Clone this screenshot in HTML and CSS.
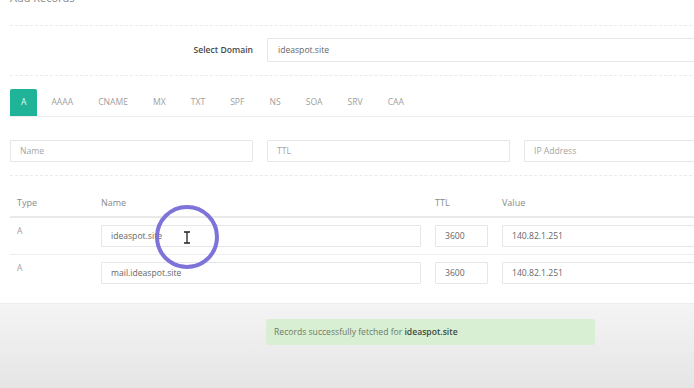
FILE: index.html
```html
<!DOCTYPE html>
<html lang="en">

<head>
    <meta charset="UTF-8">
    <meta name="viewport" content="width=device-width, initial-scale=1.0">
    <title>Add Records</title>
    <link rel="stylesheet" href="styles.css">
</head>

<body>
    <section class="panel">
        <h5 class="title">Add Records</h5>
        <div class="hr-dashed hr-first"></div>

        <div class="form-row">
            <label class="form-label" for="domain">Select Domain</label>
            <input id="domain" class="form-control domain-select" type="text" value="ideaspot.site">
        </div>

        <div class="hr-dashed"></div>

        <ul class="tabs">
            <li class="tab active">A</li>
            <li class="tab">AAAA</li>
            <li class="tab">CNAME</li>
            <li class="tab">MX</li>
            <li class="tab">TXT</li>
            <li class="tab">SPF</li>
            <li class="tab">NS</li>
            <li class="tab">SOA</li>
            <li class="tab">SRV</li>
            <li class="tab">CAA</li>
        </ul>

        <div class="form-row record-inputs">
            <input class="form-control" type="text" placeholder="Name">
            <input class="form-control" type="text" placeholder="TTL">
            <input class="form-control" type="text" placeholder="IP Address">
        </div>

        <div class="hr-dashed"></div>

        <table class="records">
            <colgroup>
                <col class="col-type">
                <col class="col-name">
                <col class="col-ttl">
                <col>
            </colgroup>
            <thead>
                <tr>
                    <th>Type</th>
                    <th>Name</th>
                    <th>TTL</th>
                    <th>Value</th>
                </tr>
            </thead>
            <tbody>
                <tr>
                    <td>A</td>
                    <td><input class="form-control" type="text" value="ideaspot.site"></td>
                    <td><input class="form-control" type="text" value="3600"></td>
                    <td><input class="form-control" type="text" value="140.82.1.251"></td>
                </tr>
                <tr>
                    <td>A</td>
                    <td><input class="form-control" type="text" value="mail.ideaspot.site"></td>
                    <td><input class="form-control" type="text" value="3600"></td>
                    <td><input class="form-control" type="text" value="140.82.1.251"></td>
                </tr>
            </tbody>
        </table>
    </section>

    <section class="footer-area">
        <div class="alert">Records successfully fetched for <b>ideaspot.site</b></div>
    </section>

    <!-- screen recorder click highlight -->
    <div class="click-ring">
        <svg class="ibeam" width="8" height="13" viewBox="0 0 8 13">
            <path d="M1 1h6M4 1v11M1 12h6" fill="none" stroke="#222" stroke-width="1.3" />
        </svg>
    </div>
</body>

</html>
```

FILE: styles.css
```css
html,
body {
    margin: 0;
    height: 100%;
    overflow: hidden;
}

body {
    position: relative;
    width: 767px;
    font-family: "Open Sans", "DejaVu Sans", sans-serif;
    font-size: 8.6px;
    color: #676a6c;
    background: #e4e4e4;
}

.panel {
    background: #fff;
    padding: 0 0 12px 10px;
    border-bottom: 1px solid #ececec;
}

.title {
    margin: -10px 0 0;
    font-size: 11px;
    line-height: 15px;
    font-weight: 400;
    color: #888;
}

.hr-dashed {
    border-top: 1px dashed #e9eaec;
    margin: 13px 0;
}

.hr-first {
    margin: 20px 0 12px;
}

.form-row {
    display: grid;
    grid-template-columns: repeat(3, 1fr);
    column-gap: 14px;
    align-items: center;
}

.form-label {
    text-align: right;
    font-weight: 600;
    color: #4a4a4a;
}

.form-control {
    box-sizing: border-box;
    width: 100%;
    height: 22px;
    padding: 0 9px;
    border: 1px solid #e5e6e7;
    border-radius: 1px;
    background: #fff;
    font-family: inherit;
    font-size: 8.6px;
    color: #666;
    outline: none;
}

.form-control::placeholder {
    color: #a4a4a4;
}

.form-control.domain-select {
    grid-column: span 2;
    height: 24px;
    padding-left: 10px;
}

.tabs {
    display: flex;
    list-style: none;
    margin: 0 0 23px;
    padding: 0;
    border-bottom: 1px solid #ececec;
}

.tab {
    height: 27px;
    line-height: 27px;
    padding: 0 11px;
    margin-right: 3px;
    color: #a0a0a0;
}

.tab.active {
    background: #1fb497;
    color: #e8f8f4;
    border-radius: 2px 2px 0 0;
}

.record-inputs {
    margin-bottom: 13px;
}

.records {
    width: 100%;
    border-collapse: collapse;
}

.col-type {
    width: 84px;
}

.col-name {
    width: 334px;
}

.col-ttl {
    width: 67px;
}

.records th {
    padding: 7px;
    line-height: 13px;
    text-align: left;
    font-weight: 400;
    font-size: 9px;
    color: #8a8a8a;
    border-bottom: 2px solid #e9e9e9;
}

.records td {
    padding: 7px;
    line-height: 13px;
    vertical-align: top;
    color: #a0a0a0;
    border-bottom: 1px solid #eeeeee;
}

.records tbody tr:last-child td {
    border-bottom: none;
}

.footer-area {
    box-sizing: border-box;
    height: 100%;
    padding: 15px 0 0 266px;
    background: linear-gradient(#f4f4f4, #e4e4e4 90px);
}

.alert {
    width: 329px;
    height: 26px;
    line-height: 26px;
    box-sizing: border-box;
    padding: 0 8px;
    background: #d9efd3;
    border-radius: 2px;
    color: #6c7a69;
}

.alert b {
    font-weight: 600;
    color: #3f4a3d;
}

.click-ring {
    position: absolute;
    left: 155px;
    top: 205px;
    width: 64px;
    height: 64px;
    box-sizing: border-box;
    border: 4px solid #7d73d9;
    border-radius: 50%;
    display: flex;
    align-items: center;
    justify-content: center;
}
```
